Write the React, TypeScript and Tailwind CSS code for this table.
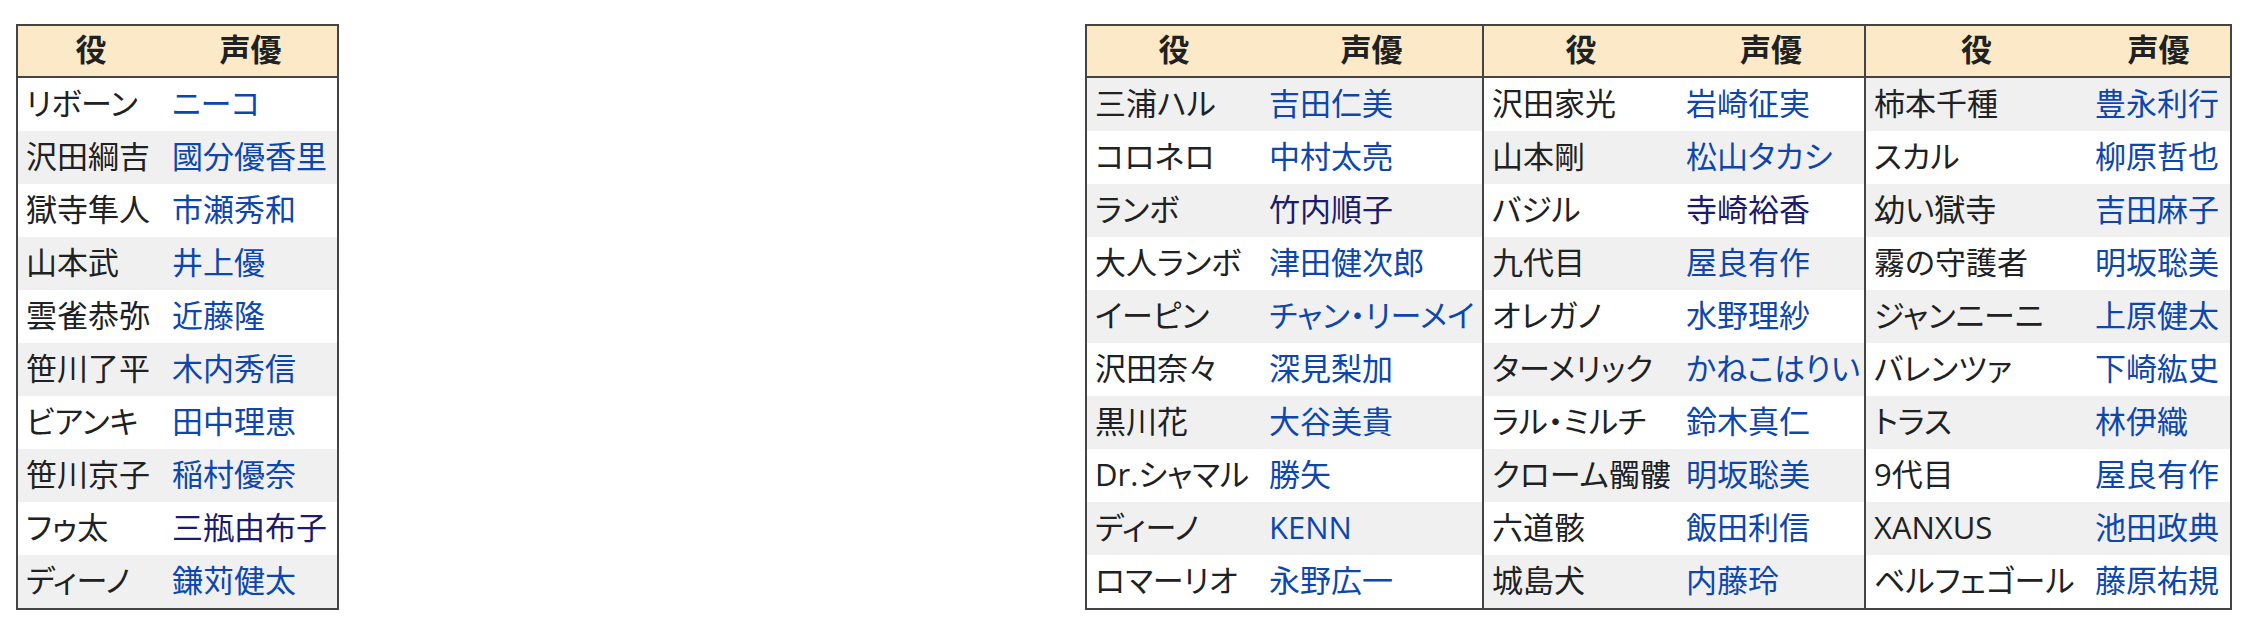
// Cast tables · 役 / 声優 · one short table on the left, a three-part wide table on the right.
// Column widths are fixed so every section lines up with the source page.

type Cast = {
  role: string;
  actor: string;
  /** visited link · darker navy */
  visited?: boolean;
};

type Section = {
  cast: Cast[];
  /** grid template for the two columns */
  cols: string;
  /** first body row shaded? striping restarts per section */
  shadeFirst: boolean;
  divider?: boolean;
};

const LEFT: Cast[] = [
  { role: "リボーン", actor: "ニーコ" },
  { role: "沢田綱吉", actor: "國分優香里" },
  { role: "獄寺隼人", actor: "市瀬秀和" },
  { role: "山本武", actor: "井上優" },
  { role: "雲雀恭弥", actor: "近藤隆" },
  { role: "笹川了平", actor: "木内秀信" },
  { role: "ビアンキ", actor: "田中理恵" },
  { role: "笹川京子", actor: "稲村優奈" },
  { role: "フゥ太", actor: "三瓶由布子", visited: true },
  { role: "ディーノ", actor: "鎌苅健太" },
];

const RIGHT_A: Cast[] = [
  { role: "三浦ハル", actor: "吉田仁美" },
  { role: "コロネロ", actor: "中村太亮" },
  { role: "ランボ", actor: "竹内順子", visited: true },
  { role: "大人ランボ", actor: "津田健次郎" },
  { role: "イーピン", actor: "チャン・リーメイ" },
  { role: "沢田奈々", actor: "深見梨加" },
  { role: "黒川花", actor: "大谷美貴" },
  { role: "Dr.シャマル", actor: "勝矢" },
  { role: "ディーノ", actor: "KENN" },
  { role: "ロマーリオ", actor: "永野広一" },
];

const RIGHT_B: Cast[] = [
  { role: "沢田家光", actor: "岩崎征実" },
  { role: "山本剛", actor: "松山タカシ" },
  { role: "バジル", actor: "寺崎裕香", visited: true },
  { role: "九代目", actor: "屋良有作" },
  { role: "オレガノ", actor: "水野理紗" },
  { role: "ターメリック", actor: "かねこはりい" },
  { role: "ラル・ミルチ", actor: "鈴木真仁" },
  { role: "クローム髑髏", actor: "明坂聡美" },
  { role: "六道骸", actor: "飯田利信" },
  { role: "城島犬", actor: "内藤玲" },
];

const RIGHT_C: Cast[] = [
  { role: "柿本千種", actor: "豊永利行" },
  { role: "スカル", actor: "柳原哲也" },
  { role: "幼い獄寺", actor: "吉田麻子" },
  { role: "霧の守護者", actor: "明坂聡美" },
  { role: "ジャンニーニ", actor: "上原健太" },
  { role: "バレンツァ", actor: "下崎紘史" },
  { role: "トラス", actor: "林伊織" },
  { role: "9代目", actor: "屋良有作" },
  { role: "XANXUS", actor: "池田政典" },
  { role: "ベルフェゴール", actor: "藤原祐規" },
];

function CastSection({ cast, cols, shadeFirst, divider }: Section) {
  return (
    <div className={`grid ${cols} ${divider ? "border-l-2 border-[#444]" : ""}`}>
      <div className="col-span-2 grid grid-cols-subgrid h-[52px] border-b-2 border-[#444] bg-[#fbe9c8] font-bold text-[#202122]">
        <div className="flex items-center justify-center pb-[3px]">役</div>
        <div className="flex items-center justify-center pb-[3px]">声優</div>
      </div>
      {cast.map((c, i) => (
        <div
          key={i}
          className={`col-span-2 grid grid-cols-subgrid h-[53px] ${
            (i % 2 === 0) === shadeFirst ? "bg-[#f0f0f0]" : "bg-white"
          }`}
        >
          <div className="flex items-center pl-[8px] pb-[3px] whitespace-nowrap text-[#202122]">
            {c.role}
          </div>
          <div
            className={`flex items-center pl-[8px] pb-[3px] whitespace-nowrap ${
              c.visited ? "text-[#1c1a6b]" : "text-[#0d47ad]"
            }`}
          >
            {c.actor}
          </div>
        </div>
      ))}
    </div>
  );
}

export default function App() {
  return (
    <div className="min-h-screen bg-white pt-[24px] pl-[16px] flex items-start gap-[746px] font-['Open_Sans','Noto_Sans_CJK_JP',sans-serif] text-[31px] leading-none [font-feature-settings:'palt']">
      <div className="flex border-2 border-[#444]">
        <CastSection cast={LEFT} cols="grid-cols-[146px_173px]" shadeFirst={false} />
      </div>

      <div className="flex border-2 border-[#444]">
        <CastSection cast={RIGHT_A} cols="grid-cols-[174px_221px]" shadeFirst={true} />
        <CastSection cast={RIGHT_B} cols="grid-cols-[194px_186px]" shadeFirst={false} divider />
        <CastSection cast={RIGHT_C} cols="grid-cols-[221px_143px]" shadeFirst={true} divider />
      </div>
    </div>
  );
}
